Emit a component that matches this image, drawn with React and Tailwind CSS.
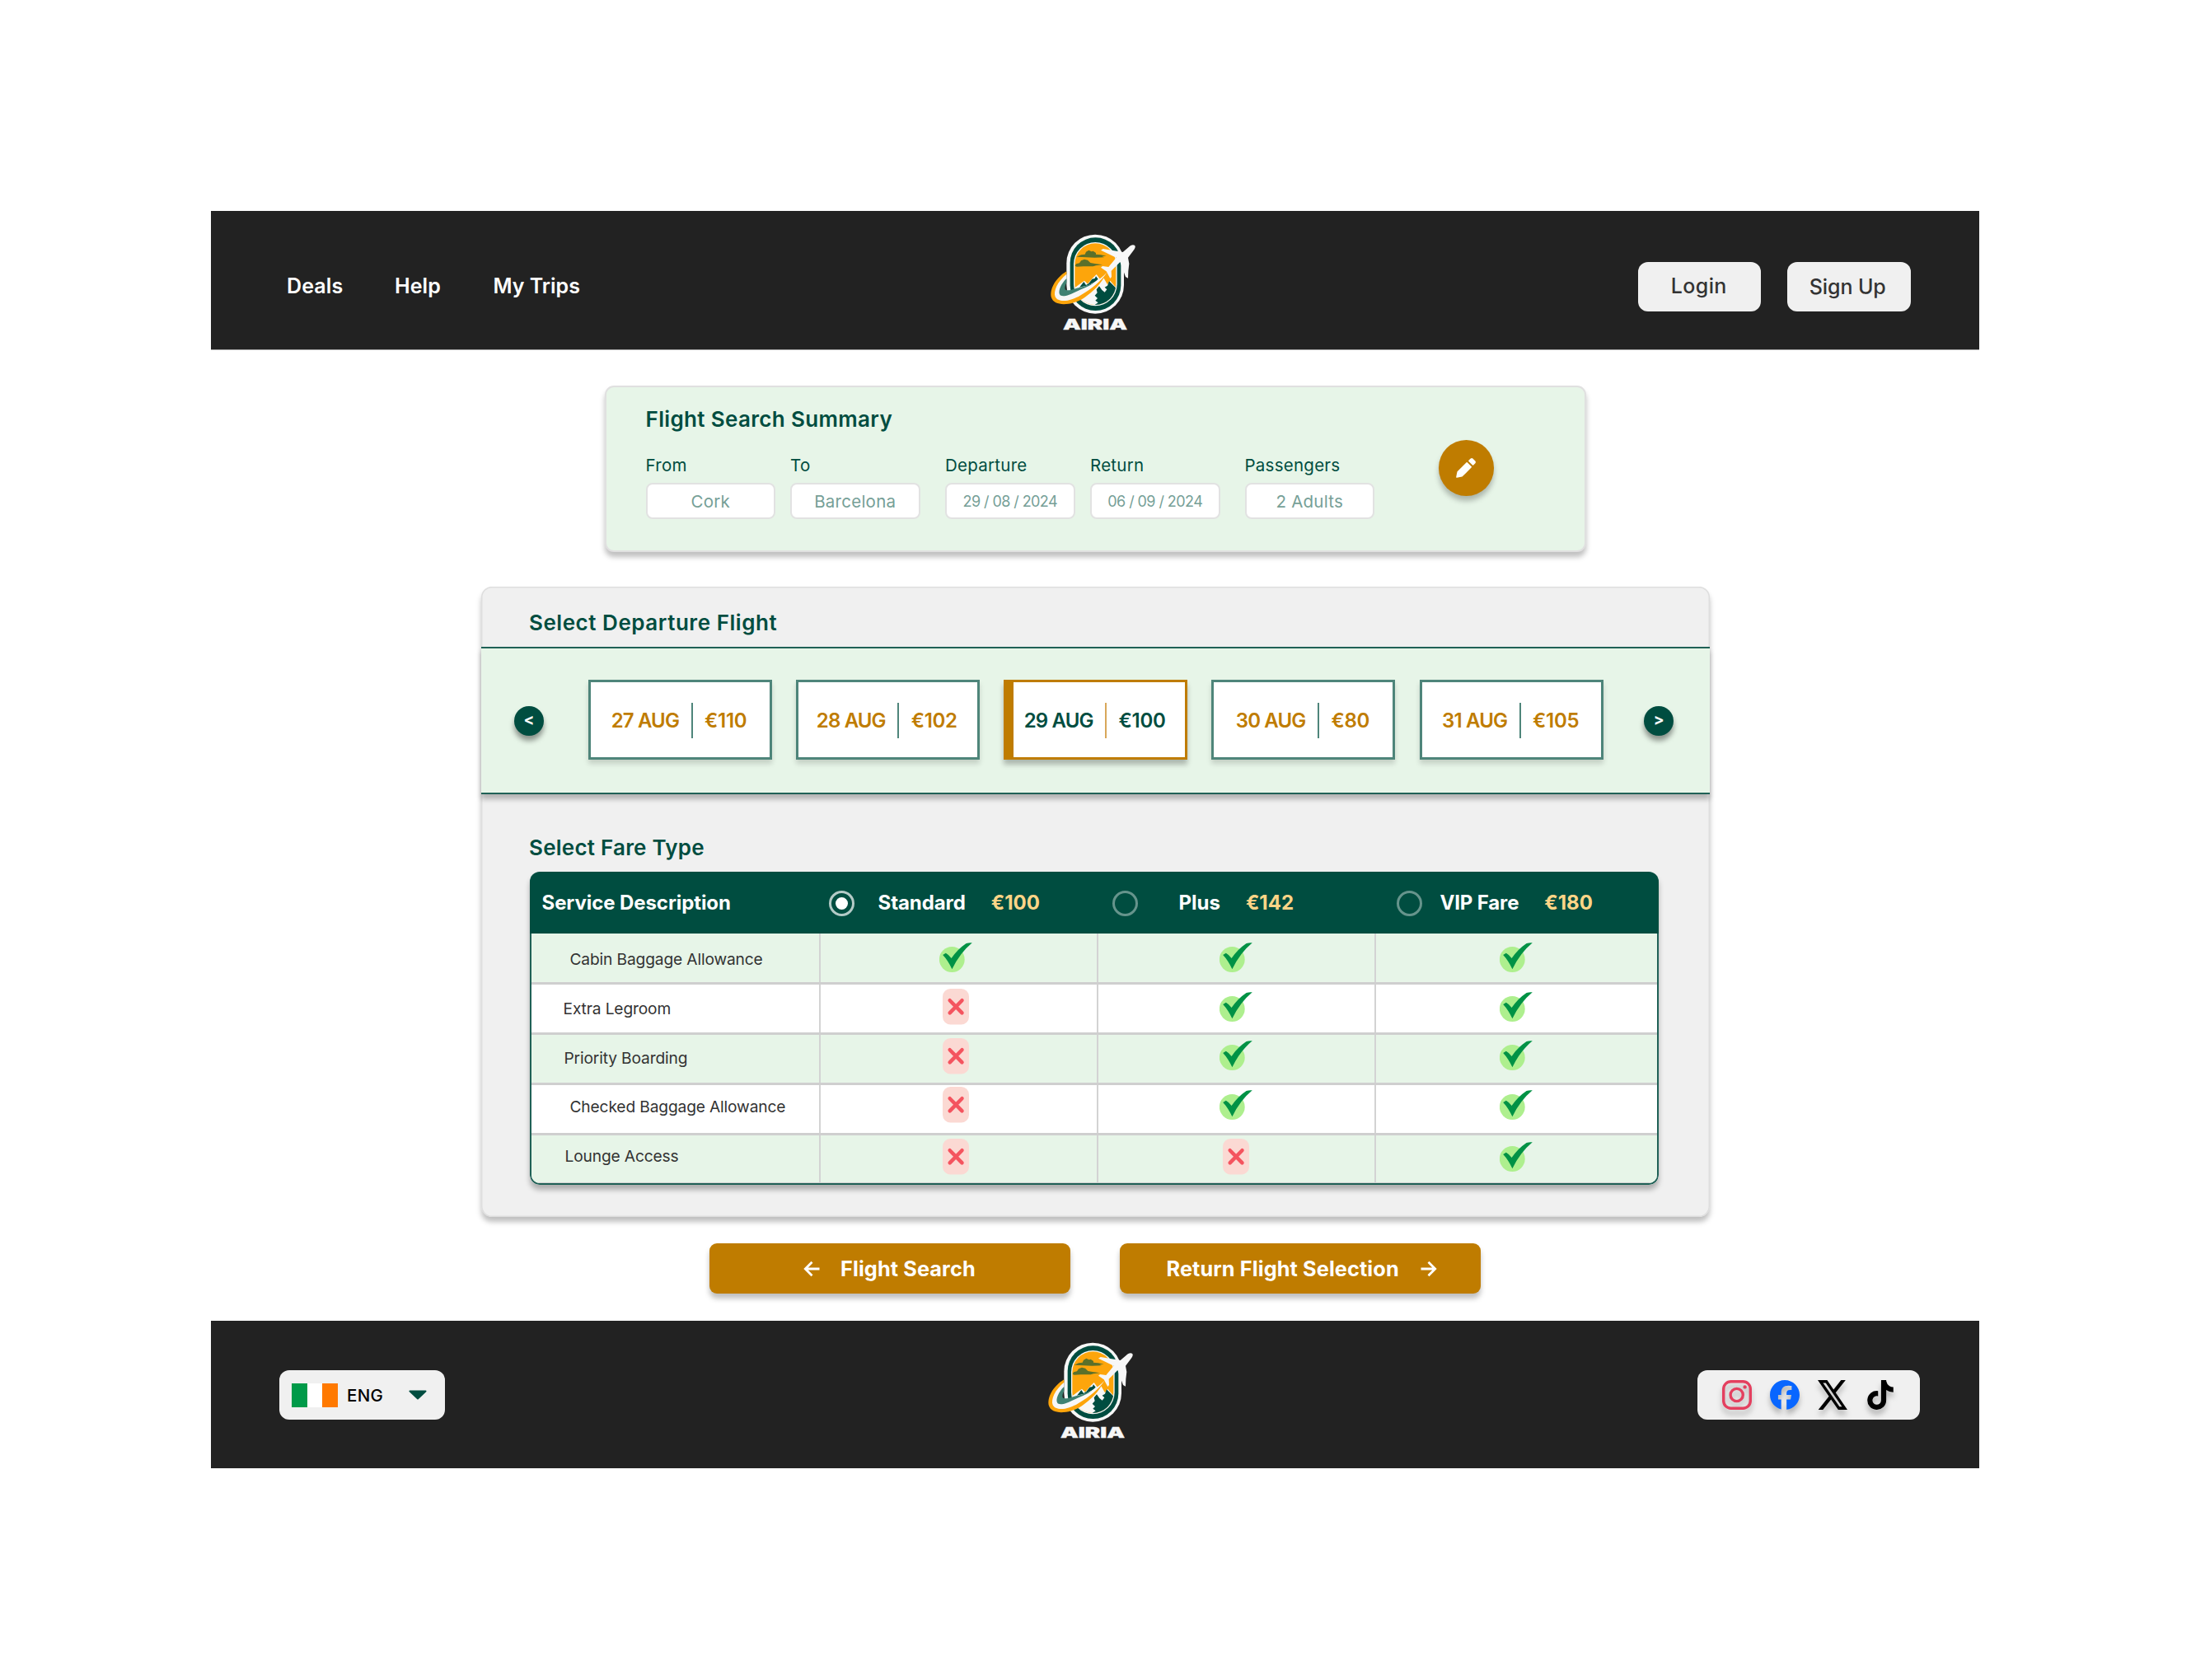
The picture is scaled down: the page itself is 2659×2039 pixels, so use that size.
import React from 'react'
import { FaFacebook, FaTiktok } from 'react-icons/fa6'

function Logo() {
  return (
    <svg viewBox="0 0 420 420" className="block h-[140px] w-[140px] shrink-0">
      <defs>
        <clipPath id="badge"><rect x="133" y="76" width="150" height="224" rx="75" /></clipPath>
      </defs>
      <rect x="103" y="44" width="209" height="288" rx="104" fill="#f7f7f7" />
      <rect x="116" y="55" width="185" height="266" rx="92" fill="#004d40" />
      <rect x="129" y="72" width="158" height="232" rx="79" fill="#f7f7f7" />
      <g clipPath="url(#badge)">
        <rect x="130" y="70" width="160" height="235" fill="#fda50b" />
        <path d="M140 125 L156 118 L170 116 L174 107 L184 101 L194 106 L200 104 L210 111 L210 116 L228 118 L248 122 L232 124 L240 127 L205 128 L160 126 Z" fill="#5b702a" />
        <path d="M134 158 L138 151 L150 148 L156 139 L168 134 L180 137 L190 147 L206 150 L234 154 L210 157 L200 160 L165 160 L140 161 Z" fill="#5b702a" />
        <path d="M130 240 L150 225 L168 212 L180 224 L196 205 L212 189 L226 208 L238 202 L252 226 L262 212 L290 245 L290 310 L130 310 Z" fill="#f7f7f7" />
        <path d="M150 236 L166 216 L174 228 L184 222 L196 206 L206 204 L210 196 L218 206 L205 218 L185 228 Z" fill="#004d40" />
        <path d="M206 300 L218 292 L208 284 L216 276 L206 266 L215 256 L212 244 L222 232 L232 246 L242 254 L250 244 L242 236 L252 230 L258 214 L290 246 L290 305 Z" fill="#004d40" />
        <path d="M222 300 Q262 292 280 250 L284 252 Q268 300 225 305 Z" fill="#f7f7f7" />
      </g>
      <path d="M103 178 C62 203 40 245 48 274 C58 306 120 304 166 275 C202 250 230 222 250 182 C225 212 190 228 150 246 C120 262 100 272 86 262 C76 248 86 215 103 192 Z" fill="#fda50b" />
      <path d="M103 188 C70 215 54 250 62 271 C72 292 115 290 156 264 C196 240 228 215 250 182 C220 214 186 226 146 245 C120 256 100 262 92 254 C88 240 94 220 103 208 Z" fill="#f7f7f7" />
      <path d="M103 204 C84 222 72 248 78 262 C84 274 112 266 138 252 C162 240 186 232 206 218 C180 230 160 234 138 240 C120 246 104 250 98 244 C96 238 98 228 103 220 Z" fill="#3f8172" />
      <path d="M352 84 C345 79 336 83 330 89 L308 108 L236 96 L228 101 L250 112 L284 128 L256 162 L234 159 L228 164 L248 178 L262 204 L267 198 L266 176 L298 144 L318 198 L327 203 L328 176 L331 150 L327 128 L345 104 C352 96 355 90 352 84 Z" fill="#f7f7f7" />
      <text x="90" y="390" textLength="234" lengthAdjust="spacingAndGlyphs" fontFamily="Inter, sans-serif" fontWeight="900" fontSize="51" fill="#f7f7f7" stroke="#f7f7f7" strokeWidth="1">AIRIA</text>
    </svg>
  )
}

function Check() {
  return (
    <svg viewBox="0 0 40 36" className="block h-[36px] w-[40px]">
      <circle cx="15.3" cy="20.5" r="15.4" fill="#aeef8e" />
      <path d="M4.2 15 L7.8 12.8 Q11 14.4 14.6 19 Q22 8 32.6 .9 Q36 0 39.8 .3 Q25 12.5 15.4 32.2 Q10.3 21.5 4.2 15 Z" fill="#009245" />
    </svg>
  )
}

function Cross() {
  return (
    <svg viewBox="0 0 32 44" className="block h-[44px] w-[32px]">
      <rect width="32" height="43.6" rx="9.5" fill="#fbd9d3" />
      <path d="M8.7 14.2 L23.5 29.4 M23.5 14.2 L8.7 29.4" stroke="#f4545f" strokeWidth="4.5" strokeLinecap="round" />
    </svg>
  )
}

function Field({ label, value, small, className }) {
  return (
    <div className={`w-[157.5px] ${className}`}>
      <div className="h-[33px] text-[20.5px] leading-[24px] tracking-[0.25px] whitespace-nowrap">{label}</div>
      <div className="flex h-[44px] items-center justify-center rounded-[8px] border-2 border-[#e2e2e2] bg-white text-[#76a097]">
        <span className={small ? 'text-[18px] tracking-[-0.57px]' : 'pt-[2px] text-[20.5px] tracking-[0.25px]'}>{value}</span>
      </div>
    </div>
  )
}

const days = [
  { date: '27 AUG', price: '€110' },
  { date: '28 AUG', price: '€102' },
  { date: '29 AUG', price: '€100', selected: true },
  { date: '30 AUG', price: '€80' },
  { date: '31 AUG', price: '€105' },
]

function DayCard({ date, price, selected }) {
  return (
    <div className={`relative flex h-[97px] w-[223px] items-center justify-center gap-[14.5px] border-[3px] bg-white pr-[2px] text-[24px] font-semibold ${selected ? 'border-[#bf7c00] text-[#004d40] shadow-[0_6px_6px_rgba(0,0,0,0.25)]' : 'border-[#4e857a] text-[#bf7c00] shadow-[0_5px_6px_rgba(0,0,0,0.15)]'}`}>
      {selected && <span className="absolute -top-[3px] -bottom-[3px] -left-[3px] w-[12px] bg-[#bf7c00]" />}
      <span className="pt-[3px] tracking-[-0.85px]">{date}</span>
      <span className={`mt-[2px] h-[43px] w-[2px] ${selected ? 'bg-[#d8a75a]' : 'bg-[#4e857a]'}`} />
      <span className="pt-[3px] tracking-[-0.3px]">{price}</span>
    </div>
  )
}

function Arrow({ children }) {
  return (
    <button className="mt-[2px] flex h-[36px] w-[36px] shrink-0 items-center justify-center rounded-full bg-[#004d40] text-[19px] font-bold text-white shadow-[0_6px_6px_rgba(0,0,0,0.4)]">{children}</button>
  )
}

function Fare({ name, price, checked, nameClass, width }) {
  return (
    <div className={`flex items-center ${width}`}>
      <span className={`mt-[2px] flex h-[31px] w-[31px] items-center justify-center rounded-full border-3 ${checked ? 'border-[#b3cac6]' : 'border-[#66948c]'}`}>
        {checked && <span className="h-[15px] w-[15px] rounded-full bg-white" />}
      </span>
      <span className={`whitespace-nowrap ${nameClass}`}>{name}</span>
      <span className="ml-[31px] text-[#ffd587]">{price}</span>
    </div>
  )
}

const rows = [
  { name: 'Cabin Baggage Allowance', text: 'h-[62px] border-b-[3px] bg-[#e7f5e8]', pos: 'pt-[19px] pl-[47px]', yes: 'pt-[11px]', no: '', v: [1, 1, 1] },
  { name: 'Extra Legroom', text: 'h-[61px] border-b-[3px] bg-white', pos: 'pt-[17px] pl-[39px]', yes: 'pt-[9px]', no: 'pt-[5px]', v: [0, 1, 1] },
  { name: 'Priority Boarding', text: 'h-[61px] border-b-[3px] bg-[#e7f5e8]', pos: 'pt-[16px] pl-[40px]', yes: 'pt-[7px]', no: 'pt-[4px]', v: [0, 1, 1] },
  { name: 'Checked Baggage Allowance', text: 'h-[61px] border-b-[3px] bg-white', pos: 'pt-[14px] pl-[47px]', yes: 'pt-[6px]', no: 'pt-[2px]', v: [0, 1, 1] },
  { name: 'Lounge Access', text: 'h-[58px] border-b-[1px] bg-[#e7f5e8]', pos: 'pt-[13px] pl-[41px]', yes: 'pt-[8px]', no: 'pt-[4px]', v: [0, 0, 1] },
]
const cols = [
  { cell: 'w-[337px]', yes: 'pl-[144px]', no: 'pl-[148px]' },
  { cell: 'w-[337.5px]', yes: 'pl-[147px]', no: 'pl-[151px]' },
  { cell: 'flex-1', yes: 'pl-[150px]', no: 'pl-[153px]' },
]

export default function App() {
  return (
    <div className="flex h-[2039px] w-[2659px] flex-col items-start bg-white pt-[256px] pl-[256px] font-['Inter',sans-serif] text-[#004d40]">
      <header className="flex h-[169px] w-[2146px] items-start border-b border-[#a8a8a8] bg-[#222222]">
        <nav className="flex w-[1004px] pt-[76px] pl-[92px] text-[25px] leading-[30px] font-semibold whitespace-nowrap text-white">
          <a className="w-[131px] tracking-[0.1px]">Deals</a>
          <a className="w-[119.5px] tracking-[0.1px]">Help</a>
          <a>My Trips</a>
        </nav>
        <div className="pt-[14px]"><Logo /></div>
        <div className="flex gap-[32px] pt-[62px] pl-[587.5px] text-[25px] font-[450] text-[#333333]">
          <button className="flex h-[60px] w-[149.5px] items-center justify-center rounded-[12px] bg-[#f0f0f0] pr-px tracking-[0.4px]">Login</button>
          <button className="flex h-[60px] w-[149.5px] items-center justify-center rounded-[12px] bg-[#f0f0f0] pt-[2px] pr-[3px] tracking-[-0.1px]">Sign Up</button>
        </div>
      </header>

      <section className="mt-[43px] ml-[477.5px] flex h-[202px] w-[1191.5px] rounded-[11px] border-2 border-[#e0e0e0] bg-[#e7f5e8] pl-[48px] shadow-[0_6px_6px_rgba(0,0,0,0.25)]">
        <div className="pt-[23px]">
          <h2 className="text-[26px] leading-[32px] font-semibold tracking-[0.35px]">Flight Search Summary</h2>
          <div className="mt-[28px] flex">
            <Field label="From" value="Cork" className="" />
            <Field label="To" value="Barcelona" className="ml-[18px]" />
            <Field label="Departure" value="29 / 08 / 2024" small className="ml-[30.5px]" />
            <Field label="Return" value="06 / 09 / 2024" small className="ml-[18.5px]" />
            <Field label="Passengers" value="2 Adults" className="ml-[30px]" />
          </div>
        </div>
        <button className="mt-[64px] ml-[77.5px] flex h-[67.5px] w-[67.5px] items-center justify-center rounded-full bg-[#bf7c00] shadow-[0_6px_6px_rgba(0,0,0,0.25)]">
          <svg viewBox="0 0 24 24" className="h-[24px] w-[24px]" fill="#ffffff" stroke="#ffffff" strokeWidth="1.6" strokeLinejoin="round">
            <path d="M1 23 L2.2 16.8 L13.2 5.8 L18.2 10.8 L7.2 21.8 Z" />
            <path d="M16 3.4 L18.3 1.1 Q19.2 .6 20 1.2 L22.8 4 Q23.4 4.8 22.8 5.7 L20.6 8 Z" />
          </svg>
        </button>
      </section>

      <section className="mt-[42px] ml-[328px] h-[765px] w-[1490.5px] rounded-[13px] bg-[#f0f0f0] shadow-[0_6px_6px_rgba(0,0,0,0.25),inset_0_0_0_1.5px_#dedede]">
        <h2 className="h-[73px] pt-[28px] pl-[58px] text-[26px] leading-[32px] font-semibold tracking-[0.54px]">Select Departure Flight</h2>
        <div className="flex h-[179px] items-center border-y-[2px] border-[#1f6156] bg-[#e7f5e8] pb-[2px] pl-[40px] shadow-[0_6px_6px_rgba(0,0,0,0.25)]">
          <Arrow>&lt;</Arrow>
          <div className="mr-[49.5px] ml-[53.5px] flex gap-[29.3px]">
            {days.map((d) => <DayCard key={d.date} {...d} />)}
          </div>
          <Arrow>&gt;</Arrow>
        </div>
        <h2 className="mt-[49px] h-[45px] pl-[58px] text-[26px] leading-[32px] font-semibold tracking-[0.23px]">Select Fare Type</h2>
        <div className="ml-[58.5px] w-[1370.5px] overflow-hidden rounded-[12px] shadow-[0_6px_6px_rgba(0,0,0,0.28)]">
          <div className="flex h-[75px] items-center bg-[#004d40] pl-[15px] text-[24px] font-bold text-white">
            <span className="w-[348.5px] tracking-[-0.08px]">Service Description</span>
            <Fare name="Standard" price="€100" checked nameClass="ml-[28.5px] tracking-[-0.08px]" width="w-[344px]" />
            <Fare name="Plus" price="€142" nameClass="ml-[49.5px]" width="w-[344.5px]" />
            <Fare name="VIP Fare" price="€180" nameClass="ml-[22px] tracking-[-0.15px]" width="" />
          </div>
          <div className="overflow-hidden rounded-b-[12px] border-x-[2px] border-b-[2px] border-[#1f6156]">
            {rows.map((r) => (
              <div key={r.name} className={`flex border-[#cfcfcf] ${r.text}`}>
                <div className={`w-[349px] text-[19.2px] leading-[24px] tracking-[-0.15px] whitespace-nowrap text-[#333333] ${r.pos}`}>{r.name}</div>
                {cols.map((c, i) => (
                  <div key={i} className={`border-l-2 border-[#d3d3d3] ${c.cell} ${r.v[i] ? `${c.yes} ${r.yes}` : `${c.no} ${r.no}`}`}>
                    {r.v[i] ? <Check /> : <Cross />}
                  </div>
                ))}
              </div>
            ))}
          </div>
        </div>
      </section>

      <div className="mt-[32px] ml-[605px] flex gap-[60px] text-[25.3px] font-bold tracking-[0.1px] text-white">
        <button className="flex h-[61px] w-[438px] items-center rounded-[9px] bg-[#bf7c00] pl-[113.5px] shadow-[0_6px_6px_rgba(0,0,0,0.25)]">
          <svg viewBox="0 0 20 20" className="h-[20px] w-[20px]" fill="none" stroke="#ffffff" strokeWidth="2.8"><path d="M19.5 10 H3 M10.5 1.8 L2.3 10 L10.5 18.2" /></svg>
          <span className="ml-[25.5px]">Flight Search</span>
        </button>
        <button className="flex h-[61px] w-[438px] items-center rounded-[9px] bg-[#bf7c00] pl-[56.5px] shadow-[0_6px_6px_rgba(0,0,0,0.25)]">
          <span className="whitespace-nowrap">Return Flight Selection</span>
          <svg viewBox="0 0 20 20" className="ml-[26px] h-[20px] w-[20px]" fill="none" stroke="#ffffff" strokeWidth="2.8"><path d="M.5 10 H17 M9.5 1.8 L17.7 10 L9.5 18.2" /></svg>
        </button>
      </div>

      <footer className="mt-[33px] flex h-[179px] w-[2146px] items-start bg-[#222222]">
        <div className="mt-[60px] ml-[83px] flex h-[60px] w-[201px] items-center rounded-[12px] bg-[#f0f0f0] pl-[15px]">
          <div className="flex h-[29px] w-[56px]">
            <span className="flex-1 bg-[#009a49]" /><span className="flex-1 bg-white" /><span className="flex-1 bg-[#ff7900]" />
          </div>
          <span className="ml-[11px] pt-[2px] text-[20.5px] font-medium tracking-[0.3px] text-black">ENG</span>
          <svg viewBox="0 0 22 12" className="ml-[31px] h-[12px] w-[22px]"><path d="M1.5 1.5 H20.5 L11 10.5 Z" fill="#004d40" stroke="#004d40" strokeWidth="2" strokeLinejoin="round" /></svg>
        </div>
        <div className="pt-[12px] pl-[717px]"><Logo /></div>
        <div className="mt-[60px] ml-[663px] flex h-[60px] w-[270px] items-center gap-[22px] rounded-[12px] bg-[#f0f0f0] pl-[30px] text-black">
          <svg viewBox="0 0 36 36" className="h-[36px] w-[36px] overflow-visible drop-shadow-[0_6px_3px_rgba(0,0,0,0.25)]" fill="none" stroke="#e4405f" strokeWidth="3.4">
            <rect x="1.7" y="1.7" width="32.6" height="32.6" rx="9" />
            <circle cx="17.7" cy="18" r="7.6" />
            <circle cx="27.6" cy="8.4" r="2.2" fill="#e4405f" stroke="none" />
          </svg>
          <FaFacebook className="h-[36px] w-[36px] text-[#0866ff] drop-shadow-[0_6px_3px_rgba(0,0,0,0.25)]" />
          <svg viewBox="1.25 2.25 21.6 19.5" preserveAspectRatio="none" className="h-[36px] w-[36px] drop-shadow-[0_6px_3px_rgba(0,0,0,0.25)]" fill="currentColor">
            <path d="M18.244 2.25h3.308l-7.227 8.26 8.502 11.24H16.17l-5.214-6.817L4.99 21.75H1.68l7.73-8.835L1.254 2.25H8.08l4.713 6.231zm-1.161 17.52h1.833L7.084 4.126H5.117z" />
          </svg>
          <FaTiktok className="h-[36px] w-[36px] drop-shadow-[0_6px_3px_rgba(0,0,0,0.25)]" />
        </div>
      </footer>
    </div>
  )
}
